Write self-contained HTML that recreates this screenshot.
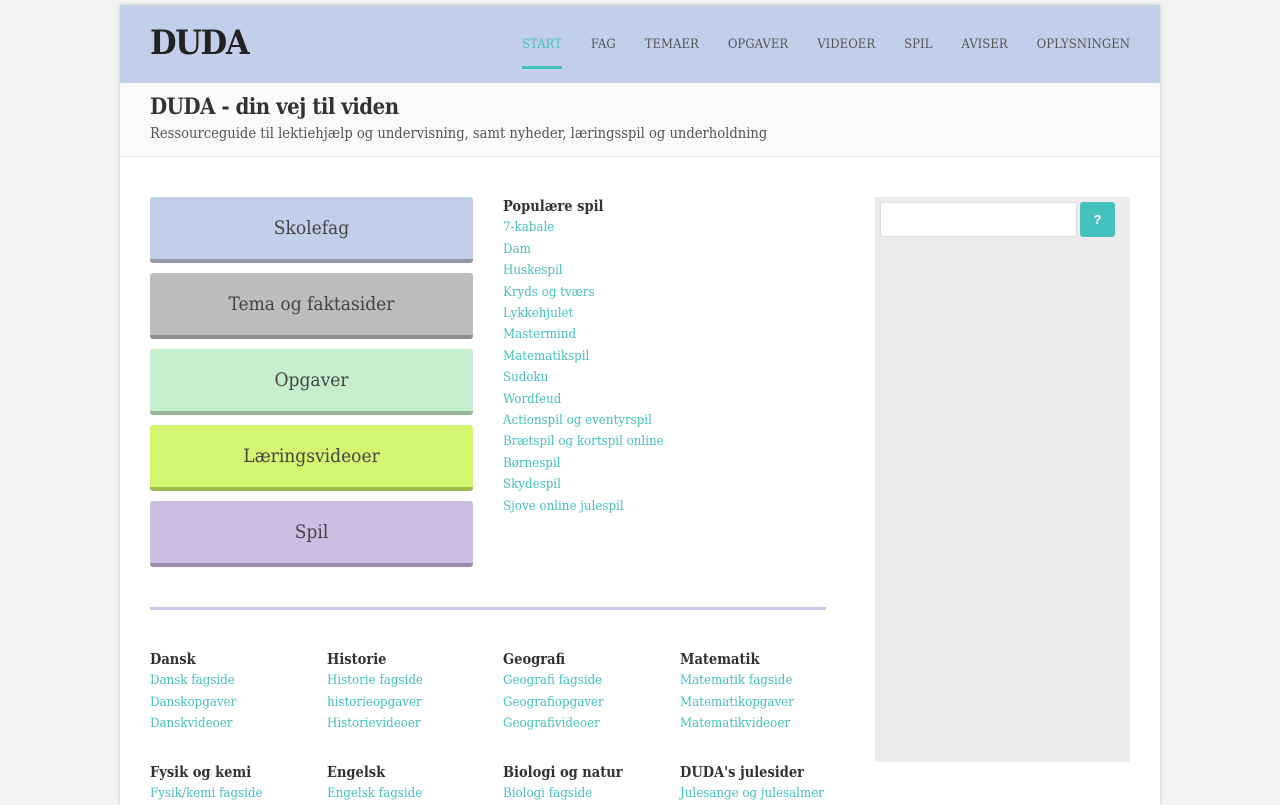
<!DOCTYPE html>
<html><head><meta charset="utf-8"><style>
*{margin:0;padding:0;box-sizing:border-box}
body{background:#f3f3f3;font-family:"DejaVu Serif",serif;font-stretch:condensed;color:#333;width:1280px;height:800px;overflow:hidden}
.wrap{position:absolute;left:120px;top:5px;width:1040px;height:800px;background:#fff;box-shadow:0 0 4px rgba(0,0,0,.2)}
.hdr{height:78px;background:#c1cfea;position:relative}
.logo{position:absolute;left:30px;top:18px;font-size:34px;font-weight:bold;color:#222;letter-spacing:-1.3px}
.nav{position:absolute;right:30px;top:32px;display:flex;gap:29px;font-size:13px;color:#555}
.nav span{position:relative;height:34px}
.nav .on{color:#45c1c0}
.nav .on:after{content:"";position:absolute;left:0;right:0;top:29px;height:3px;background:#45c1c0}
.sub{height:74px;background:#fafafa;border-bottom:1px solid #e8e8e8;padding:11px 30px}
.sub h1{font-size:22px;line-height:26px;letter-spacing:-.5px}
.sub p{font-size:14.6px;color:#555;margin-top:5px}
.btn{position:absolute;left:30px;width:323px;height:66px;border-radius:3px;font-size:19px;text-align:center;line-height:62px;color:#444}
.links{position:absolute;font-size:13.2px;line-height:21.4px}
.links b{color:#333;font-size:14.5px;display:block}
.links a{color:#45c1c0;text-decoration:none;display:block}
.side{position:absolute;left:755px;top:192px;width:255px;height:565px;background:#ececec}
.inp{position:absolute;left:5px;top:5px;width:197px;height:35px;background:#fff;border:1px solid #ddd;border-radius:3px}
.q{position:absolute;left:205px;top:5px;width:35px;height:35px;background:#45c1c0;border-radius:3px;color:#fff;font-size:13px;font-weight:bold;text-align:center;line-height:35px;font-family:"Liberation Sans",sans-serif}
.hr{position:absolute;left:30px;top:602px;width:676px;height:3px;background:#c5c7ea}
</style></head><body><div class="wrap">
<div class="hdr"><div class="logo">DUDA</div>
<div class="nav"><span class="on">START</span><span>FAG</span><span>TEMAER</span><span>OPGAVER</span><span>VIDEOER</span><span>SPIL</span><span>AVISER</span><span>OPLYSNINGEN</span></div></div>
<div class="sub"><h1>DUDA - din vej til viden</h1><p>Ressourceguide til lektiehjælp og undervisning, samt nyheder, læringsspil og underholdning</p></div>
<div class="btn" style="top:192px;background:#c1cfea;border-bottom:4px solid #9198a8">Skolefag</div>
<div class="btn" style="top:268px;background:#bdbdbd;border-bottom:4px solid #8d8d8d">Tema og faktasider</div>
<div class="btn" style="top:344px;background:#c5eecd;border-bottom:4px solid #95b49b">Opgaver</div>
<div class="btn" style="top:420px;background:#d2f670;border-bottom:4px solid #9dbb50">Læringsvideoer</div>
<div class="btn" style="top:496px;background:#cebce2;border-bottom:4px solid #9b8ca9">Spil</div>
<div class="links" style="left:383px;top:191px"><b>Populære spil</b><a>7-kabale</a><a>Dam</a><a>Huskespil</a><a>Kryds og tværs</a><a>Lykkehjulet</a><a>Mastermind</a><a>Matematikspil</a><a>Sudoku</a><a>Wordfeud</a><a>Actionspil og eventyrspil</a><a>Brætspil og kortspil online</a><a>Børnespil</a><a>Skydespil</a><a>Sjove online julespil</a></div>
<div class="hr"></div>
<div class="links" style="left:30px;top:644px"><b>Dansk</b><a>Dansk fagside</a><a>Danskopgaver</a><a>Danskvideoer</a></div>
<div class="links" style="left:207px;top:644px"><b>Historie</b><a>Historie fagside</a><a>historieopgaver</a><a>Historievideoer</a></div>
<div class="links" style="left:383px;top:644px"><b>Geografi</b><a>Geografi fagside</a><a>Geografiopgaver</a><a>Geografivideoer</a></div>
<div class="links" style="left:560px;top:644px"><b>Matematik</b><a>Matematik fagside</a><a>Matematikopgaver</a><a>Matematikvideoer</a></div>
<div class="links" style="left:30px;top:757px"><b>Fysik og kemi</b><a>Fysik/kemi fagside</a></div>
<div class="links" style="left:207px;top:757px"><b>Engelsk</b><a>Engelsk fagside</a></div>
<div class="links" style="left:383px;top:757px"><b>Biologi og natur</b><a>Biologi fagside</a></div>
<div class="links" style="left:560px;top:757px"><b>DUDA's julesider</b><a>Julesange og julesalmer</a></div>
<div class="side"><div class="inp"></div><div class="q">?</div></div>
</div></body></html>
